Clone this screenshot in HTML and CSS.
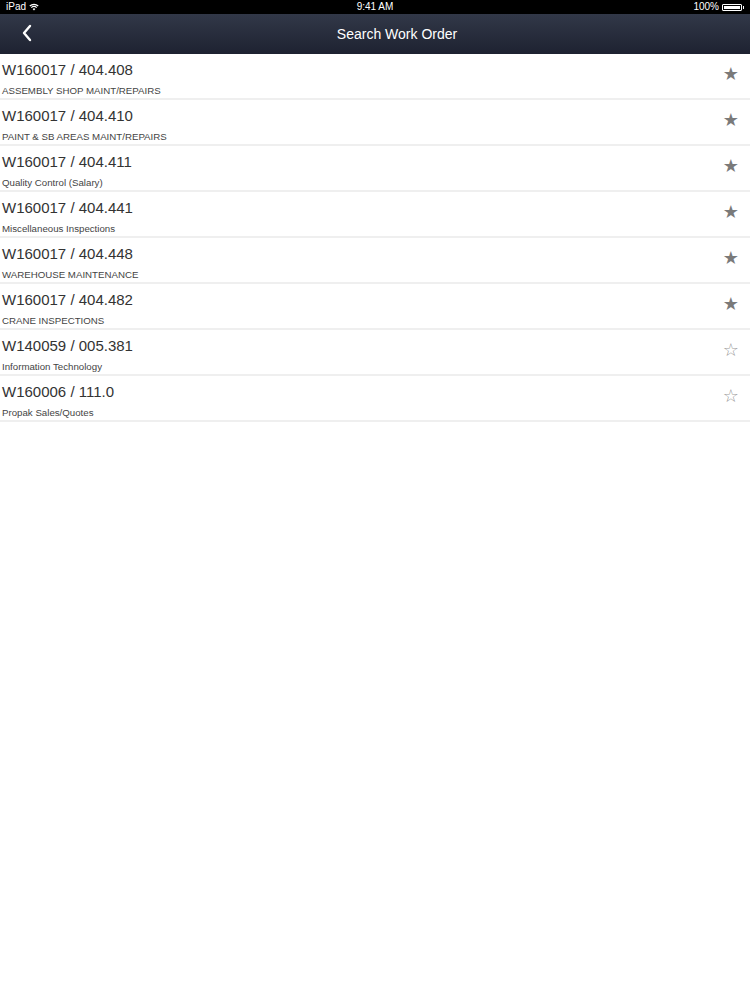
FILE: index.html
```html
<!DOCTYPE html>
<html>
  <head>
    <meta name="viewport" content="width=device-width, initial-scale=1.0" />
    <title>Search Work Order</title>
    <link rel="stylesheet" href="styles.css">
  </head>
  <body>
    <div class="status-bar">
      <span class="status-left">iPad
        <svg class="wifi" width="10" height="8" viewBox="0 0 10 8">
          <path d="M5 7.5 L3.6 6 A2 2 0 0 1 6.4 6 Z" fill="#fff" />
          <path d="M2.3 4.6 A4 4 0 0 1 7.7 4.6" stroke="#fff" stroke-width="1.2" fill="none" />
          <path d="M0.8 3 A6 6 0 0 1 9.2 3" stroke="#fff" stroke-width="1.2" fill="none" />
        </svg>
      </span>
      <span class="status-time">9:41 AM</span>
      <span class="status-right">100%
        <span class="battery"><span class="battery-fill"></span></span>
      </span>
    </div>

    <div class="nav-bar">
      <svg class="back" width="12" height="18" viewBox="0 0 12 18">
        <path d="M9 2 L3 9 L9 16" stroke="#fff" stroke-width="2.4" fill="none" stroke-linecap="round" stroke-linejoin="round" />
      </svg>
      <h1>Search Work Order</h1>
    </div>

    <ul class="orders">
      <li class="order">
        <div class="order-text">
          <div class="order-title">W160017 / 404.408</div>
          <div class="order-desc">ASSEMBLY SHOP MAINT/REPAIRS</div>
        </div>
        <span class="star fav">&#9733;</span>
      </li>
      <li class="order">
        <div class="order-text">
          <div class="order-title">W160017 / 404.410</div>
          <div class="order-desc">PAINT &amp; SB AREAS MAINT/REPAIRS</div>
        </div>
        <span class="star fav">&#9733;</span>
      </li>
      <li class="order">
        <div class="order-text">
          <div class="order-title">W160017 / 404.411</div>
          <div class="order-desc">Quality Control (Salary)</div>
        </div>
        <span class="star fav">&#9733;</span>
      </li>
      <li class="order">
        <div class="order-text">
          <div class="order-title">W160017 / 404.441</div>
          <div class="order-desc">Miscellaneous Inspections</div>
        </div>
        <span class="star fav">&#9733;</span>
      </li>
      <li class="order">
        <div class="order-text">
          <div class="order-title">W160017 / 404.448</div>
          <div class="order-desc">WAREHOUSE MAINTENANCE</div>
        </div>
        <span class="star fav">&#9733;</span>
      </li>
      <li class="order">
        <div class="order-text">
          <div class="order-title">W160017 / 404.482</div>
          <div class="order-desc">CRANE INSPECTIONS</div>
        </div>
        <span class="star fav">&#9733;</span>
      </li>
      <li class="order">
        <div class="order-text">
          <div class="order-title">W140059 / 005.381</div>
          <div class="order-desc">Information Technology</div>
        </div>
        <span class="star">&#9734;</span>
      </li>
      <li class="order">
        <div class="order-text">
          <div class="order-title">W160006 / 111.0</div>
          <div class="order-desc">Propak Sales/Quotes</div>
        </div>
        <span class="star">&#9734;</span>
      </li>
    </ul>
  </body>
</html>
```

FILE: styles.css
```css
body {
  margin: 0;
  background-color: #fff;
  font-family: "Liberation Sans", Arial, sans-serif;
  color: #333;
}

/* status bar */
.status-bar {
  height: 14px;
  background: #000;
  color: #fff;
  font-size: 10px;
  line-height: 14px;
  display: flex;
  justify-content: space-between;
  align-items: center;
  padding: 0 6px;
}

.status-left,
.status-right {
  display: flex;
  align-items: center;
  gap: 3px;
  width: 80px;
}

.status-right {
  justify-content: flex-end;
}

.battery {
  width: 20px;
  height: 7px;
  border: 1px solid #fff;
  border-radius: 1px;
  padding: 1px;
  box-sizing: border-box;
  display: flex;
  margin-right: 2px;
  position: relative;
}

.battery::after {
  content: "";
  position: absolute;
  right: -3px;
  top: 1px;
  width: 1px;
  height: 3px;
  background: #fff;
}

.battery-fill {
  flex: 1;
  background: #fff;
}

/* nav bar */
.nav-bar {
  height: 40px;
  background: linear-gradient(#323848, #1e2231);
  display: flex;
  align-items: center;
  justify-content: center;
  padding-left: 44px;
  position: relative;
}

.nav-bar h1 {
  margin: 0;
  color: #fff;
  font-size: 14px;
  font-weight: normal;
}

.back {
  position: absolute;
  left: 21px;
  top: 10px;
}

/* work order list */
.orders {
  list-style: none;
  margin: 0;
  padding: 0;
}

.order {
  height: 44px;
  border-bottom: 2px solid #efefef;
  display: flex;
  align-items: center;
  padding: 0 11px 0 2px;
}

.order-text {
  flex: 1;
  align-self: flex-start;
  padding-top: 7px;
}

.order-title {
  font-size: 15px;
  line-height: 18px;
  color: #333;
}

.order-desc {
  font-size: 9.7px;
  line-height: 12px;
  margin-top: 6px;
  color: #444;
}

.star {
  font-size: 18px;
  line-height: 20px;
  color: #7a7a7a;
  margin-top: -4px;
  font-family: "DejaVu Sans", sans-serif;
}

.star:not(.fav) {
  color: #999;
}
```
